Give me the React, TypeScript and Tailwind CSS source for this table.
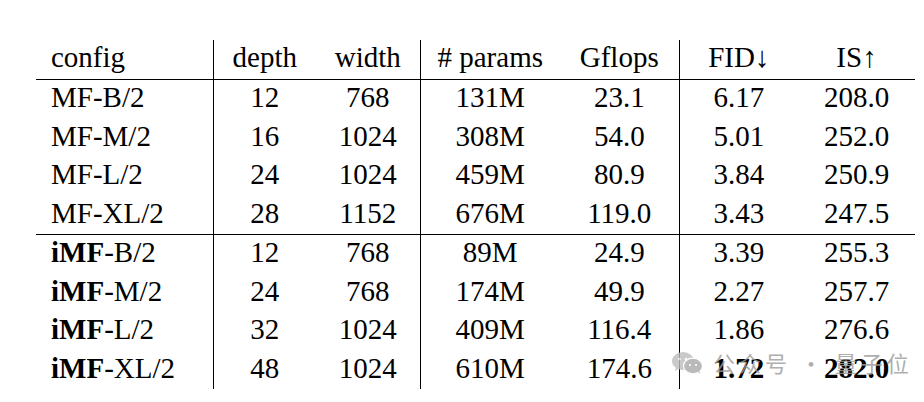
const mfRows = [
  ["MF-B/2", "12", "768", "131M", "23.1", "6.17", "208.0"],
  ["MF-M/2", "16", "1024", "308M", "54.0", "5.01", "252.0"],
  ["MF-L/2", "24", "1024", "459M", "80.9", "3.84", "250.9"],
  ["MF-XL/2", "28", "1152", "676M", "119.0", "3.43", "247.5"],
]

const imfRows = [
  ["B/2", "12", "768", "89M", "24.9", "3.39", "255.3"],
  ["M/2", "24", "768", "174M", "49.9", "2.27", "257.7"],
  ["L/2", "32", "1024", "409M", "116.4", "1.86", "276.6"],
  ["XL/2", "48", "1024", "610M", "174.6", "1.72", "282.0"],
]

const cell = "p-0 pb-[3.5px] leading-[35px] text-center"
const head = "p-0 pb-[4px] leading-[35px] font-normal"

function WeChatIcon() {
  return (
    <svg width="31" height="22" viewBox="0 0 31 22">
      <ellipse cx="11" cy="9" rx="11" ry="9" fill="#bdbdbd" />
      <path d="M4 15 L3 19 L8 16 Z" fill="#bdbdbd" />
      <ellipse cx="21" cy="14" rx="9.5" ry="7.8" fill="#a9a9a9" stroke="#fff" strokeWidth="1.2" />
      <path d="M26 20 L28 22 L27 18 Z" fill="#a9a9a9" />
      <circle cx="7.5" cy="7" r="1.3" fill="#fff" />
      <circle cx="14" cy="7" r="1.3" fill="#fff" />
      <circle cx="18" cy="13" r="1.1" fill="#fff" />
      <circle cx="24" cy="13" r="1.1" fill="#fff" />
    </svg>
  )
}

export default function App() {
  return (
    <div className="relative w-[924px] h-[402px] bg-white text-black font-[Liberation_Serif,Times_New_Roman,serif] text-[29px]">
      <div className="pt-[40px] pl-[36px]">
        <table className="table-fixed border-collapse w-[879px]">
          <colgroup>
            <col className="w-[177px]" />
            <col className="w-[103px]" />
            <col className="w-[104px]" />
            <col className="w-[140px]" />
            <col className="w-[119px]" />
            <col className="w-[119px]" />
            <col className="w-[117px]" />
          </colgroup>
          <thead>
            <tr className="border-b border-black">
              <th className={`${head} pl-[15px] text-left`}>config</th>
              <th className={`${head} border-l border-black`}>depth</th>
              <th className={head}>width</th>
              <th className={`${head} border-l border-black`}># params</th>
              <th className={head}>Gflops</th>
              <th className={`${head} border-l border-black`}>FID↓</th>
              <th className={head}>IS↑</th>
            </tr>
          </thead>
          <tbody>
            {mfRows.map((r) => (
              <tr key={r[0]}>
                <td className="p-0 pb-[3.5px] pl-[15px] leading-[35px] text-left">{r[0]}</td>
                <td className={`${cell} border-l border-black`}>{r[1]}</td>
                <td className={cell}>{r[2]}</td>
                <td className={`${cell} border-l border-black`}>{r[3]}</td>
                <td className={cell}>{r[4]}</td>
                <td className={`${cell} border-l border-black`}>{r[5]}</td>
                <td className={cell}>{r[6]}</td>
              </tr>
            ))}
            {imfRows.map((r, i) => {
              const last = i === imfRows.length - 1
              return (
                <tr key={r[0]} className={i === 0 ? "border-t border-black" : ""}>
                  <td className="p-0 pb-[3.5px] pl-[15px] leading-[35px] text-left">
                    <b>iMF</b>-{r[0]}
                  </td>
                  <td className={`${cell} border-l border-black`}>{r[1]}</td>
                  <td className={cell}>{r[2]}</td>
                  <td className={`${cell} border-l border-black`}>{r[3]}</td>
                  <td className={cell}>{r[4]}</td>
                  <td className={`${cell} border-l border-black ${last ? "font-bold" : ""}`}>{r[5]}</td>
                  <td className={`${cell} ${last ? "font-bold" : ""}`}>{r[6]}</td>
                </tr>
              )
            })}
          </tbody>
        </table>
      </div>

      {/* watermark */}
      <div className="absolute left-[672px] top-[346px] flex items-center gap-[10px] opacity-80 pointer-events-none">
        <WeChatIcon />
        <span className="font-['Noto_Sans_CJK_SC',sans-serif] text-[22px] tracking-[4px] text-[#9a9a9a]">
          公众号 · 量子位
        </span>
      </div>
    </div>
  )
}
